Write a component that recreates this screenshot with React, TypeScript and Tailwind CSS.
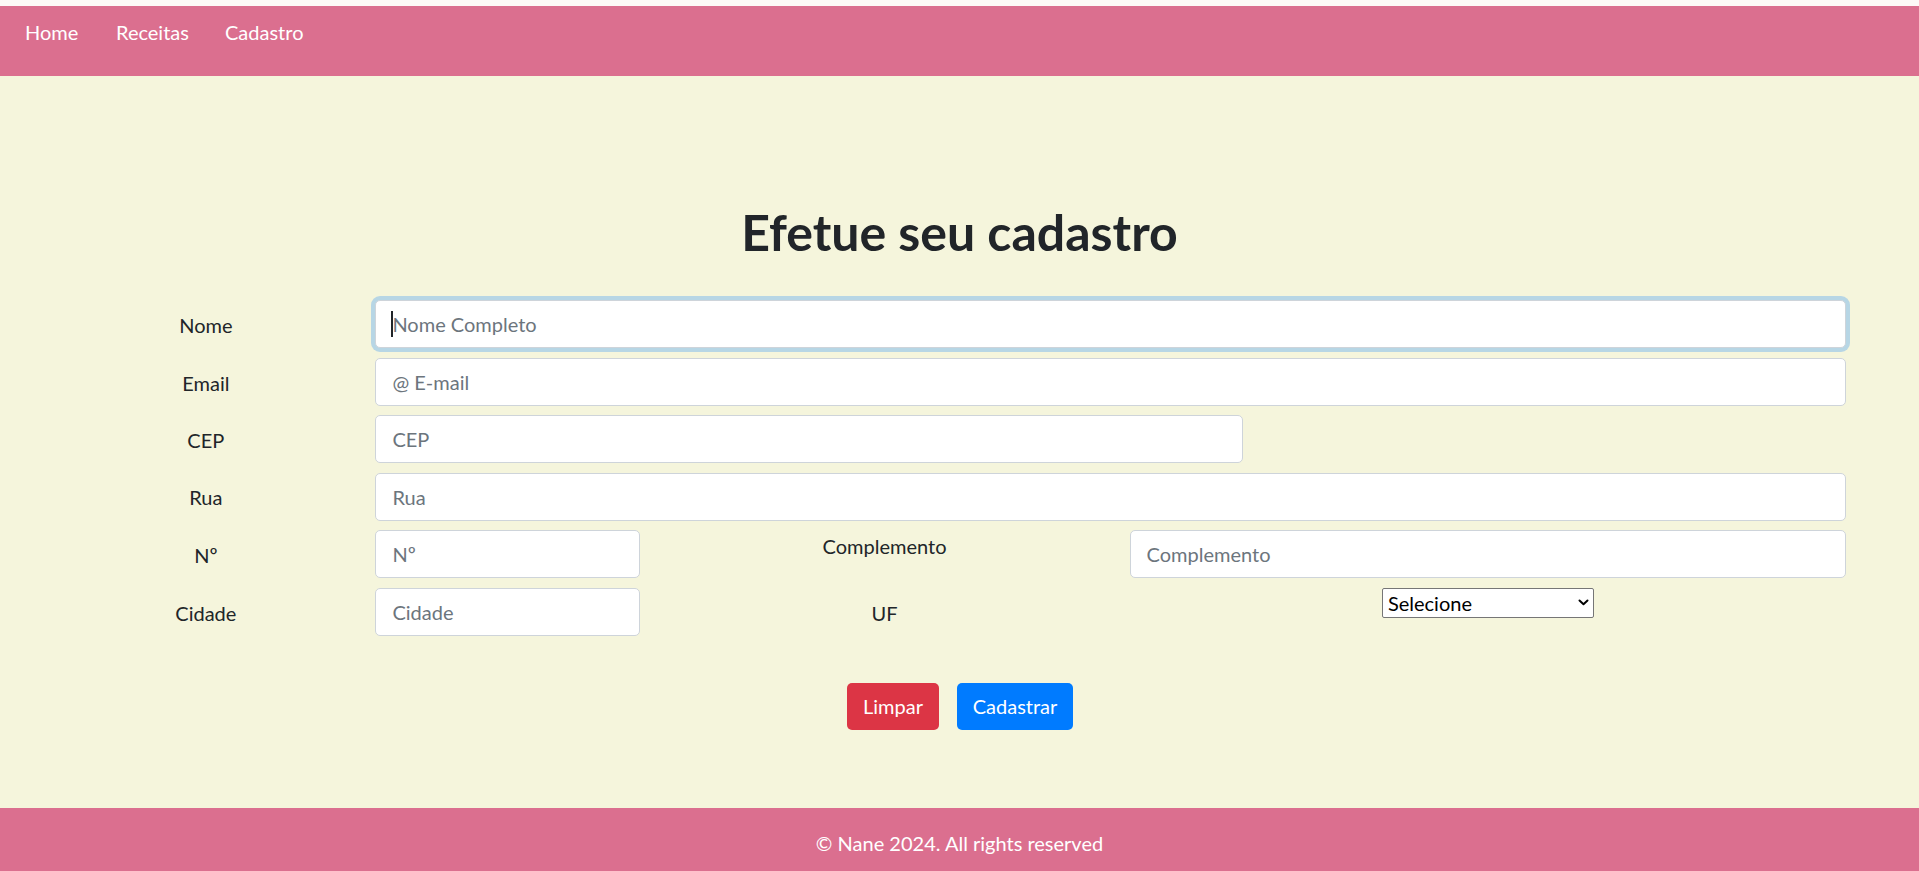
import React from 'react';

const font = { fontFamily: 'Lato, "Noto Sans", sans-serif' };

const inputClass =
  "w-full h-12 rounded-[5px] border border-[#ced4da] bg-white px-[16px] text-[20px] text-[#495057] placeholder:text-[#6c757d] outline-none";

const Label: React.FC<{ children: React.ReactNode; className?: string }> = ({ children, className }) => (
  <label className={`px-[18.75px] text-center text-[20px] leading-[30px] text-[#212529] ${className || 'pt-[10px]'}`}>
    {children}
  </label>
);

export default function App() {
  return (
    <div className="min-h-screen bg-[#f5f5dc]" style={font}>
      <div className="h-[6px] bg-[#fdf9f7]" />

      {/* navbar */}
      <nav className="h-[70px] bg-[#db6f8f] pl-[25px] pt-[11px]">
        <ul className="flex text-[20px] leading-[30px] text-white">
          <li className="w-[91px]">Home</li>
          <li className="w-[109px]">Receitas</li>
          <li>Cadastro</li>
        </ul>
      </nav>

      <main className="pt-[126px] pb-[78px]">
        <h1 className="mb-[38px] text-center text-[50px] font-bold leading-[60px] text-[#212529]">
          Efetue seu cadastro
        </h1>

        <form className="flex flex-col gap-[9.6px] pl-[55px] pr-[54px]">
          <div className="grid grid-cols-12">
            <Label className="col-span-2 pt-[10px]">Nome</Label>
            <div className="relative col-span-10 px-[18.75px]">
              <input
                className={`${inputClass} border-[#80bdff] shadow-[0_0_0_4px_rgba(0,123,255,0.25)]`}
                placeholder="Nome Completo"
              />
              <span className="pointer-events-none absolute left-[34px] top-[11px] h-[26px] w-[2px] bg-[#212529]" />
            </div>
          </div>

          <div className="grid grid-cols-12">
            <Label className="col-span-2 pt-[10px]">Email</Label>
            <div className="col-span-10 px-[18.75px]">
              <input className={inputClass} placeholder="@ E-mail" />
            </div>
          </div>

          <div className="grid grid-cols-12">
            <Label className="col-span-2 pt-[10px]">CEP</Label>
            <div className="col-span-6 px-[18.75px]">
              <input className={inputClass} placeholder="CEP" />
            </div>
          </div>

          <div className="grid grid-cols-12">
            <Label className="col-span-2 pt-[9px]">Rua</Label>
            <div className="col-span-10 px-[18.75px]">
              <input className={inputClass} placeholder="Rua" />
            </div>
          </div>

          <div className="grid grid-cols-12">
            <Label className="col-span-2 pt-[10px]">Nº</Label>
            <div className="col-span-2 px-[18.75px]">
              <input className={inputClass} placeholder="Nº" />
            </div>
            <Label className="col-span-3 pt-[1px]">Complemento</Label>
            <div className="col-span-5 px-[18.75px]">
              <input className={inputClass} placeholder="Complemento" />
            </div>
          </div>

          <div className="grid grid-cols-12">
            <Label className="col-span-2 pt-[10px]">Cidade</Label>
            <div className="col-span-2 px-[18.75px]">
              <input className={inputClass} placeholder="Cidade" />
            </div>
            <Label className="col-span-3 pt-[10px]">UF</Label>
            <div className="col-span-5 flex justify-center px-[18.75px]">
              <div className="relative h-[30px] w-[212px]">
                <select className="h-full w-full appearance-none rounded-[2px] border border-[#767676] bg-white pl-[5px] text-[20px] leading-[28px] text-black">
                  <option>Selecione</option>
                  <option>SP</option>
                  <option>RJ</option>
                  <option>MG</option>
                </select>
                <svg
                  className="pointer-events-none absolute right-[5px] top-[11px]"
                  width="11"
                  height="7"
                  viewBox="0 0 11 7"
                  fill="none"
                >
                  <path d="M1.5 1.5 L5.5 5.2 L9.5 1.5" stroke="#000" strokeWidth="2" strokeLinecap="round" strokeLinejoin="round" />
                </svg>
              </div>
            </div>
          </div>

          <div className="mt-[37px] flex justify-center gap-[18px]">
            <button type="button" className="h-[47px] w-[92px] rounded-[5px] bg-[#dc3545] text-[20px] text-white">
              Limpar
            </button>
            <button type="button" className="h-[47px] w-[116px] rounded-[5px] bg-[#007bff] text-[20px] text-white">
              Cadastrar
            </button>
          </div>
        </form>
      </main>

      <footer className="bg-[#db6f8f] py-[20px] text-center text-[20px] leading-[30px] text-white">
        © Nane 2024. All rights reserved
      </footer>
    </div>
  );
}
